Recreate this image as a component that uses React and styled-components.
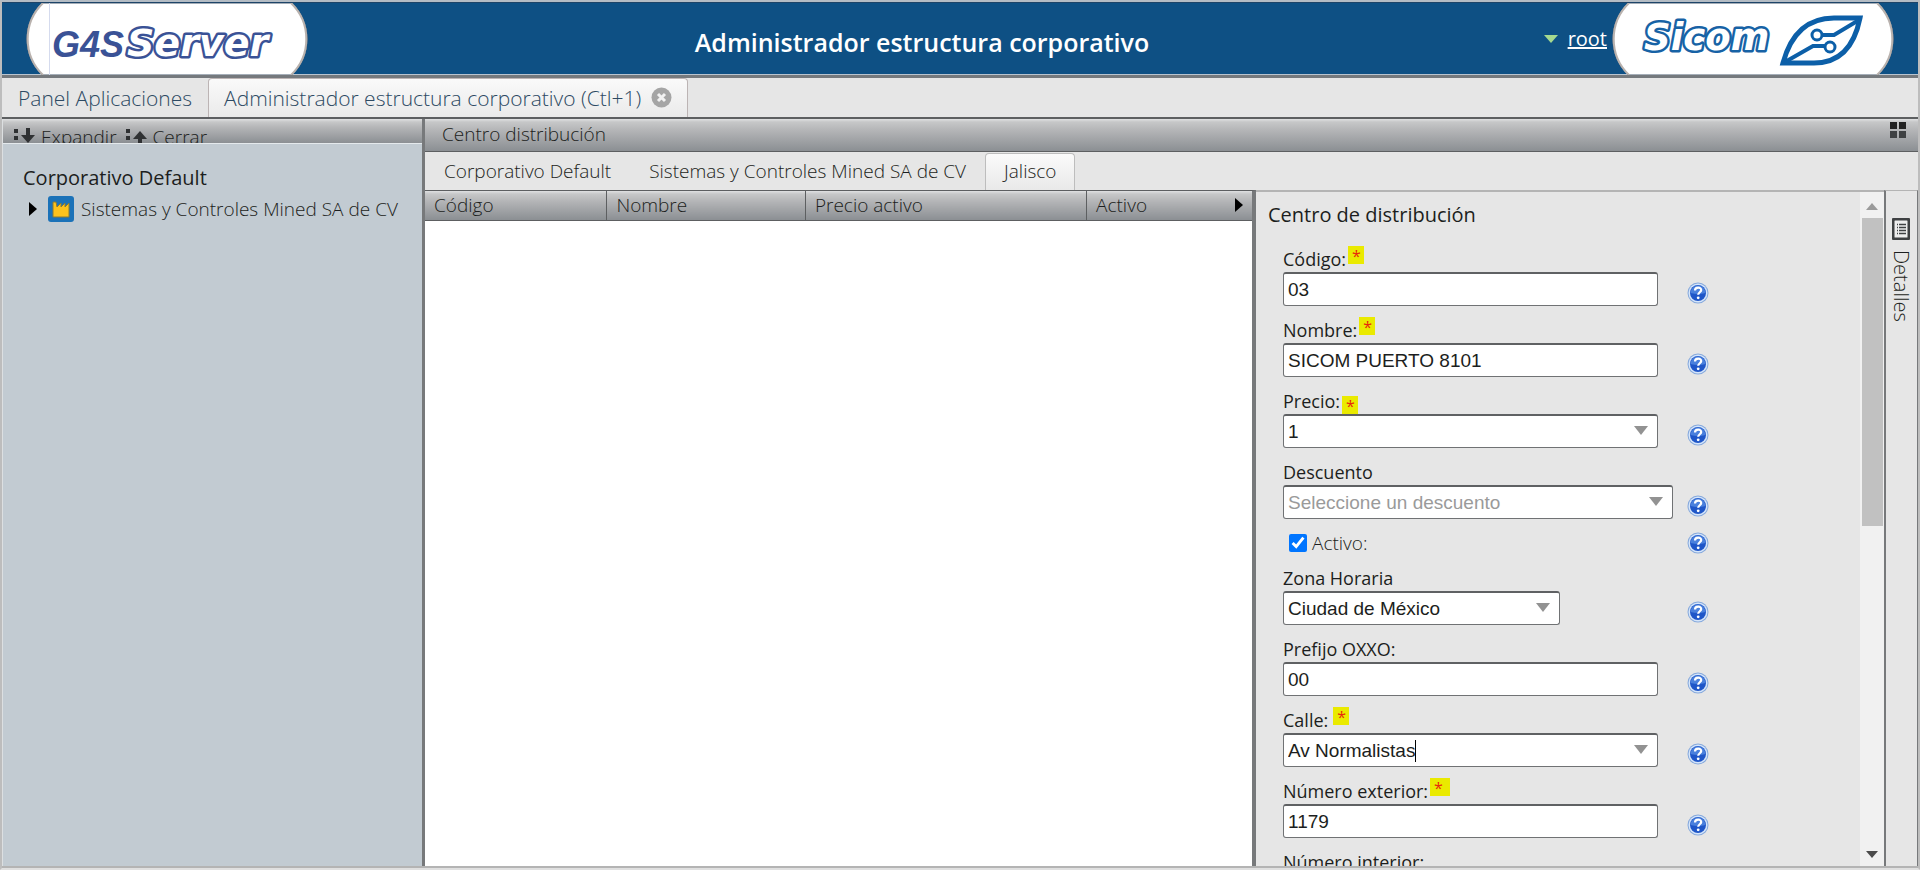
import React from "react";
import styled, { createGlobalStyle } from "styled-components";

const GlobalStyle = createGlobalStyle`
  * { box-sizing: border-box; }
  body {
    margin: 0;
    background: #e6e6e6;
    color: #1c1e20;
    font-family: "Open Sans", "Noto Sans", sans-serif;
    font-size: 19px;
    font-weight: 300;
  }
  button, input, select { font: inherit; color: inherit; }
  button { border: 0; padding: 0; background: none; }
`;

const bar = `linear-gradient(#e0e1e2 0, #c6c7c8 3px, #b4b5b7 35%, #8b8f93 100%)`;

const Page = styled.div`
  display: flex;
  flex-direction: column;
  height: 100vh;
  border: 2px solid #bdbdbd;
  border-top-color: #b4bcc4;
  border-bottom-color: #e0e0e0;
  overflow: hidden;
`;

const Header = styled.header`
  display: grid;
  grid-template-columns: 1fr auto 1fr;
  flex: none;
  height: 76px;
  padding: 0 24px;
  background: #0e5084;
  border-top: 1px solid #1d4468;
  border-bottom: 3px solid #75797d;
  box-shadow: inset 0 -1px #b9c4cf;
`;

const Title = styled.h1`
  margin: 0;
  align-self: center;
  padding: 6px 76px 0 0;
  color: #fff;
  font-size: 25px;
  line-height: 32px;
  font-weight: 600;
`;

const UserArea = styled.div`
  display: flex;
  justify-content: flex-end;
  align-items: center;
  gap: 5px;
`;

const UserLink = styled.a`
  display: flex;
  align-items: center;
  gap: 10px;
  color: #fff;
  font-size: 20px;
  font-weight: 400;
  line-height: 28px;
`;

const Logo = styled.svg`
  display: block;
  width: 282px;
  height: 72px;
`;

const AppTabs = styled.nav`
  display: flex;
  flex: none;
  height: 41px;
  border-bottom: 2px solid #5d5f61;
  background: #e6e6e6;
`;

const AppTab = styled.button`
  display: flex;
  align-items: center;
  gap: 10px;
  height: 39px;
  padding: 0 15px 1px;
  color: #2d4a63;
  font-size: 21px;
  line-height: 28px;
  border: 1px solid ${p => (p.$active ? "#bcb4b4" : "transparent")};
  border-bottom: 0;
  border-radius: 4px 4px 0 0;
  background: ${p => (p.$active ? "linear-gradient(#fafafa, #eaeaea)" : "none")};
`;

const Workspace = styled.main`
  display: flex;
  flex: 1;
  min-height: 0;
  border-bottom: 2px solid #b4b4b4;
`;

const TreePanel = styled.aside`
  flex: none;
  width: 423px;
  border-left: 1px solid #dcdfe1;
  border-right: 3px solid #77797b;
  background: #c2cbd2;
`;

const TreeTools = styled.div`
  display: flex;
  gap: 8px;
  height: 25px;
  padding: 5px 10px 0;
  overflow: hidden;
  background: ${bar};
  border-bottom: 1px solid #e4e9ec;
`;

const ToolButton = styled.button`
  display: flex;
  align-items: flex-start;
  gap: 6px;
  line-height: 26px;
`;

const Tree = styled.div`
  padding: 18px 20px;
`;

const TreeTitle = styled.div`
  font-size: 20px;
  font-weight: 400;
  line-height: 32px;
`;

const TreeRow = styled.div`
  display: flex;
  align-items: center;
  height: 30px;
  padding-left: 6px;
  white-space: nowrap;
`;

const TreeArrow = styled.svg`
  margin-right: 11px;
`;

const TreeIcon = styled.svg`
  margin-right: 7px;
`;

const Content = styled.section`
  display: flex;
  flex-direction: column;
  flex: 1;
  min-width: 0;
`;

const TitleBar = styled.div`
  display: flex;
  flex: none;
  align-items: flex-start;
  justify-content: space-between;
  height: 33px;
  padding: 3px 12px 0 17px;
  line-height: 24px;
  background: ${bar};
  border-bottom: 1px solid #5d5f61;
`;

const InnerTabs = styled.nav`
  display: flex;
  flex: none;
  align-items: flex-end;
  height: 38px;
`;

const InnerTab = styled.button`
  height: 37px;
  padding: 0 18px 2px;
  line-height: 28px;
  border: 1px solid ${p => (p.$active ? "#bdbdbd" : "transparent")};
  border-bottom: 0;
  border-radius: 4px 4px 0 0;
  background: ${p => (p.$active ? "linear-gradient(#fbfbfb, #e9e9e9)" : "none")};
`;

const Panels = styled.div`
  display: flex;
  flex: 1;
  min-height: 0;
`;

const TablePanel = styled.div`
  flex: 1;
  min-width: 0;
  background: #fff;
  border-top: 1px solid #5d5f61;
  border-right: 4px solid #77797b;
`;

const Table = styled.table`
  width: 100%;
  table-layout: fixed;
  border-collapse: collapse;
`;

const Th = styled.th`
  width: ${p => p.$width};
  height: 29px;
  padding: 0 9px;
  text-align: left;
  font-weight: 300;
  line-height: 26px;
  background: ${bar};
  border-bottom: 1px solid #5d5f61;
  border-left: ${p => (p.$first ? 0 : "1px")} solid #5d5f61;
`;

const ThInner = styled.div`
  display: flex;
  align-items: center;
  justify-content: space-between;
`;

const FormPanel = styled.form`
  flex: none;
  width: 604px;
  overflow-y: auto;
  scrollbar-width: none;
  padding: 8px 0 0 12px;
  border-top: 2px solid #b4b4b4;
`;

const FormTitle = styled.h2`
  margin: 0 0 16px;
  font-size: 20px;
  font-weight: 400;
  line-height: 30px;
`;

const Fields = styled.div`
  padding-left: 15px;
`;

const Field = styled.div`
  display: grid;
  grid-template-columns: 390px 52px;
  grid-template-rows: 26px 34px;
  margin-bottom: 11px;
`;

const Label = styled.label`
  display: flex;
  grid-column: 1 / -1;
  align-items: center;
  font-size: 18px;
  font-weight: 500;
`;

const Required = styled.span`
  align-self: ${p => (p.$low ? "flex-end" : "flex-start")};
  width: ${p => (p.$wide ? 20 : 16)}px;
  height: 18px;
  margin-left: ${p => (p.$spaced ? 5 : 2)}px;
  padding-left: 4px;
  color: #e8280c;
  background: #eaea00;
  font-size: 16px;
  line-height: 20px;
`;

const Box = styled.div`
  position: relative;
  display: flex;
  align-items: center;
  width: ${p => p.$width || 375}px;
  height: 34px;
  background: #fff;
  border: 1px solid #707274;
  border-top: 2px solid #5f6163;
  border-radius: 3px;
`;

const Input = styled.input`
  width: ${p => (p.$fit ? "auto" : "100%")};
  field-sizing: ${p => (p.$fit ? "content" : "fixed")};
  height: 100%;
  padding: 0 0 0 4px;
  border: 0;
  outline: 0;
  background: none;
  font-family: "Liberation Sans", Arial, sans-serif;
  font-size: 19px;
  font-weight: 400;
`;

const Select = styled.select`
  width: 100%;
  height: 100%;
  padding: 0 36px 0 4px;
  border: 0;
  outline: 0;
  appearance: none;
  background: none;
  color: ${p => (p.$empty ? "#9a9a9a" : "inherit")};
  font-family: "Liberation Sans", Arial, sans-serif;
  font-size: 19px;
  font-weight: 400;
`;

const Caret = styled.span`
  width: 1px;
  height: 22px;
  background: #000;
`;

const Arrow = styled.svg`
  position: absolute;
  right: 9px;
  top: 10px;
  pointer-events: none;
`;

const HelpButton = styled.button`
  justify-self: end;
  height: 24px;
  margin: ${p => (p.$inline ? "2px" : "10px")} 16px 0 0;
`;

const CheckRow = styled.div`
  display: grid;
  grid-template-columns: 390px 52px;
  height: 35px;
`;

const CheckLabel = styled.label`
  display: flex;
  align-items: center;
  gap: 5px;
  height: 26px;
  padding-left: 6px;
`;

const Checkbox = styled.input`
  width: 18px;
  height: 18px;
  margin: 0;
  accent-color: #0075ff;
`;

const ScrollBar = styled.div`
  display: flex;
  flex: none;
  flex-direction: column;
  align-items: center;
  justify-content: space-between;
  width: 24px;
  padding: 11px 0 8px;
  background: #f1f1f1;
  border-top: 2px solid #b4b4b4;
`;

const Thumb = styled.div`
  width: 21px;
  height: 47%;
  margin: 8px 0 auto;
  background: #c1c1c1;
`;

const SideTab = styled.button`
  display: flex;
  flex: none;
  flex-direction: column;
  align-items: center;
  gap: 10px;
  width: 34px;
  padding: 27px 2px 0 0;
  border-left: 2px solid #77797b;
  border-right: 1px solid #77797b;
  border-top: 1px solid #b4b4b4;
`;

const SideText = styled.span`
  writing-mode: vertical-rl;
  font-size: 20px;
  line-height: 26px;
`;

function Blob({ children, label }) {
  return (
    <Logo viewBox="0 0 282 72" role="img" aria-label={label}>
      <path d="M16 0A50 50 0 0 0 16 72H266A50 50 0 0 0 266 0Z" fill="#fff" stroke="#4b5d70" strokeWidth="1" />
      <path d="M17 0A50 50 0 0 0 17 72M265 72A50 50 0 0 0 265 0" fill="none" stroke="#b9b2ae" strokeWidth="2" />
      {children}
    </Logo>
  );
}

function ServerLogo() {
  return (
    <Blob label="G4S Server">
      <path d="M23.500 0V72" stroke="#d5dbee" />
      <g fontStyle="italic" fontWeight="700">
        <text x="26" y="54" fontFamily="'Liberation Sans'" fontSize="36" fill="#3a5296">G4S</text>
        <text x="101" y="53" fontFamily="'DejaVu Sans'" fontSize="38" fill="#fff" stroke="#3a5296" strokeWidth="5" paintOrder="stroke" strokeLinejoin="round">Server</text>
      </g>
    </Blob>
  );
}

function SicomLogo() {
  return (
    <Blob label="Sicom">
      <text x="32" y="47" fontFamily="'DejaVu Sans'" fontSize="37" fontStyle="italic" fontWeight="700" fill="#fff" stroke="#1762a5" strokeWidth="5" paintOrder="stroke" strokeLinejoin="round">Sicom</text>
      <g fill="none" stroke="#0c5fa8">
        <path d="M171 60C178 34 193 15 222 15H248C243 40 230 60 202 60Z" fill="#fff" strokeWidth="5" />
        <circle cx="205" cy="32" r="5" strokeWidth="3" />
        <circle cx="218" cy="44" r="5" strokeWidth="3" />
        <path d="M210 32H222L247 17M213 43H201L173 59" strokeWidth="4" />
      </g>
    </Blob>
  );
}

function HelpIcon() {
  return (
    <svg width="22" height="22" viewBox="0 0 22 22" aria-hidden="true">
      <circle cx="11" cy="11" r="10.500" fill="#86a9dc" />
      <circle cx="11" cy="11" r="9.500" fill="#d5e5fa" />
      <circle cx="11" cy="11" r="8" fill="#1f56c8" />
      <path d="M3.500 11a7.500 7.500 0 0 1 15 0q-7 2-15 0z" fill="#4a80dd" />
      <path d="M8 8.500c0-4 6.500-3.700 6.200-.3-.2 2-3 2.200-3 4.600" fill="none" stroke="#fff" strokeWidth="2.200" />
      <circle cx="11.200" cy="15.800" r="1.400" fill="#fff" />
    </svg>
  );
}

function Help({ inline }) {
  return (
    <HelpButton type="button" aria-label="Ayuda" $inline={inline}>
      <HelpIcon />
    </HelpButton>
  );
}

function DropArrow() {
  return (
    <Arrow width="14" height="9" viewBox="0 0 14 9">
      <path d="M0 0H14L7 9Z" fill="#929292" />
    </Arrow>
  );
}

function FormField({ id, label, mark, children }) {
  return (
    <Field>
      <Label htmlFor={id}>
        {label}
        {mark && <Required $low={mark.low} $wide={mark.wide} $spaced={mark.spaced}>*</Required>}
      </Label>
      {children}
      <Help />
    </Field>
  );
}

function TextField({ id, label, value, mark }) {
  return (
    <FormField id={id} label={label} mark={mark}>
      <Box><Input id={id} type="text" defaultValue={value} /></Box>
    </FormField>
  );
}

function SelectField({ id, label, value, mark, width, empty }) {
  return (
    <FormField id={id} label={label} mark={mark}>
      <Box $width={width}>
        <Select id={id} $empty={empty}><option>{value}</option></Select>
        <DropArrow />
      </Box>
    </FormField>
  );
}

function App() {
  return (
    <>
      <GlobalStyle />
      <Page>
        <Header>
          <ServerLogo />
          <Title>Administrador estructura corporativo</Title>
          <UserArea>
            <UserLink href="#root">
              <svg width="14" height="8" viewBox="0 0 14 8"><path d="M0 0H14L7 8Z" fill="#a5d98f" /></svg>
              root
            </UserLink>
            <SicomLogo />
          </UserArea>
        </Header>

        <AppTabs>
          <AppTab>Panel Aplicaciones</AppTab>
          <AppTab $active>
            Administrador estructura corporativo (Ctl+1)
            <svg width="21" height="21" viewBox="0 0 21 21">
              <circle cx="10.500" cy="10.500" r="10" fill="#a5a5a5" />
              <path d="M7 7l7 7M14 7l-7 7" stroke="#f2f2f2" strokeWidth="3" />
            </svg>
          </AppTab>
        </AppTabs>

        <Workspace>
          <TreePanel>
            <TreeTools>
              <ToolButton>
                <svg width="22" height="20" viewBox="0 0 22 20" fill="#2f3133">
                  <path d="M1 5h4v4H1zM1 12h4v4H1zM13 4h4v7h5l-7 8-7-8h5z" />
                </svg>
                Expandir
              </ToolButton>
              <ToolButton>
                <svg width="22" height="20" viewBox="0 0 22 20" fill="#2f3133">
                  <path d="M1 5h4v4H1zM1 12h4v4H1zM15 7l7 8h-5v5h-4v-5H8z" />
                </svg>
                Cerrar
              </ToolButton>
            </TreeTools>
            <Tree>
              <TreeTitle>Corporativo Default</TreeTitle>
              <TreeRow>
                <TreeArrow width="8" height="14" viewBox="0 0 8 14"><path d="M0 0L8 7L0 14Z" /></TreeArrow>
                <TreeIcon width="26" height="26" viewBox="0 0 26 26">
                  <rect width="26" height="26" rx="3" fill="#1b72b8" />
                  <path d="M5 21V6h3l1 5 4-4v4l4-4v4l4-4v14z" fill="#fcc21c" stroke="#8a7a34" strokeWidth="1" />
                </TreeIcon>
                Sistemas y Controles Mined SA de CV
              </TreeRow>
            </Tree>
          </TreePanel>

          <Content>
            <TitleBar>
              Centro distribución
              <svg width="16" height="16" viewBox="0 0 16 16" fill="#222">
                <path d="M0 0h7v7H0zM9 0h7v7H9z" />
                <path d="M0 9h7v7H0zM9 9h7v7H9z" fill="#3f4143" />
              </svg>
            </TitleBar>
            <InnerTabs>
              <InnerTab>Corporativo Default</InnerTab>
              <InnerTab>Sistemas y Controles Mined SA de CV</InnerTab>
              <InnerTab $active>Jalisco</InnerTab>
            </InnerTabs>

            <Panels>
              <TablePanel>
                <Table>
                  <thead>
                    <tr>
                      <Th $first $width="22%">Código</Th>
                      <Th $width="24%">Nombre</Th>
                      <Th $width="34%">Precio activo</Th>
                      <Th>
                        <ThInner>
                          Activo
                          <svg width="8" height="14" viewBox="0 0 8 14"><path d="M0 0L8 7L0 14Z" /></svg>
                        </ThInner>
                      </Th>
                    </tr>
                  </thead>
                </Table>
              </TablePanel>

              <FormPanel>
                <FormTitle>Centro de distribución</FormTitle>
                <Fields>
                  <TextField id="codigo" label="Código:" value="03" mark={{}} />
                  <TextField id="nombre" label="Nombre:" value="SICOM PUERTO 8101" mark={{}} />
                  <SelectField id="precio" label="Precio:" value="1" mark={{ low: true }} />
                  <SelectField id="descuento" label="Descuento" value="Seleccione un descuento" width={390} empty />
                  <CheckRow>
                    <CheckLabel>
                      <Checkbox type="checkbox" defaultChecked />
                      Activo:
                    </CheckLabel>
                    <Help inline />
                  </CheckRow>
                  <SelectField id="zona" label="Zona Horaria" value="Ciudad de México" width={277} />
                  <TextField id="prefijo" label="Prefijo OXXO:" value="00" />
                  <FormField id="calle" label="Calle:" mark={{ spaced: true }}>
                    <Box>
                      <Input $fit id="calle" type="text" defaultValue="Av Normalistas" />
                      <Caret />
                      <DropArrow />
                    </Box>
                  </FormField>
                  <TextField id="exterior" label="Número exterior:" value="1179" mark={{ wide: true }} />
                  <TextField id="interior" label="Número interior:" value="" />
                </Fields>
              </FormPanel>

              <ScrollBar>
                <svg width="12" height="7" viewBox="0 0 12 7"><path d="M0 7L6 0L12 7Z" fill="#9b9b9b" /></svg>
                <Thumb />
                <svg width="12" height="7" viewBox="0 0 12 7"><path d="M0 0H12L6 7Z" fill="#4b4b4b" /></svg>
              </ScrollBar>
              <SideTab>
                <svg width="18" height="22" viewBox="0 0 18 22">
                  <rect x="1" y="1" width="16" height="20" rx="2" fill="#eee" stroke="#3f4143" strokeWidth="3" />
                  <path d="M5 6.500h1M7 6.500h7M5 9.500h1M7 9.500h7M5 12.500h1M7 12.500h7M5 15.500h1M7 15.500h7" stroke="#3f4143" strokeWidth="1.500" />
                </svg>
                <SideText>Detalles</SideText>
              </SideTab>
            </Panels>
          </Content>
        </Workspace>
      </Page>
    </>
  );
}

export default App;
